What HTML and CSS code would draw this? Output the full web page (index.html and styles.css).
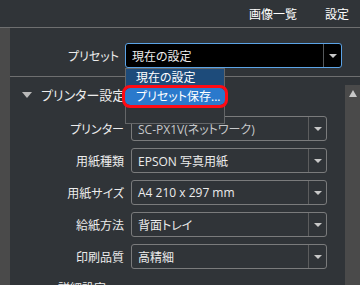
FILE: index.html
```html
<!DOCTYPE html>
<html>
<head>
  <link rel="stylesheet" href="styles.css">
</head>
<body>
  <div class="topbar">
    <span>画像一覧</span>
    <span>設定</span>
  </div>

  <div class="main">
    <div class="side"></div>

    <div class="panel">
      <div class="preset-row">
        <span class="label preset-label">プリセット</span>
        <div class="select preset-select">
          <span class="value">現在の設定</span>
          <span class="arrow"></span>
        </div>

        <div class="menu">
          <div class="menu-item">現在の設定</div>
          <div class="menu-item active">プリセット保存...</div>
        </div>
      </div>

      <div class="settings">
        <div class="settings-body">
          <div class="section-title">
            <span class="caret"></span>
            <span>プリンター設定</span>
          </div>

          <div class="row">
            <span class="label">プリンター</span>
            <div class="select">
              <span class="value dim">SC-PX1V(ネットワーク)</span>
              <span class="arrow"></span>
            </div>
          </div>
          <div class="row">
            <span class="label">用紙種類</span>
            <div class="select">
              <span class="value">EPSON 写真用紙</span>
              <span class="arrow"></span>
            </div>
          </div>
          <div class="row">
            <span class="label">用紙サイズ</span>
            <div class="select">
              <span class="value">A4 210 x 297 mm</span>
              <span class="arrow"></span>
            </div>
          </div>
          <div class="row">
            <span class="label">給紙方法</span>
            <div class="select">
              <span class="value">背面トレイ</span>
              <span class="arrow"></span>
            </div>
          </div>
          <div class="row">
            <span class="label">印刷品質</span>
            <div class="select">
              <span class="value">高精細</span>
              <span class="arrow"></span>
            </div>
          </div>

          <div class="subsection">詳細設定</div>
        </div>

        <div class="scrollbar">
          <span class="scroll-up"></span>
        </div>
      </div>
    </div>
  </div>
</body>
</html>
```

FILE: styles.css
```css
body {
  margin: 0;
  width: 360px;
  height: 285px;
  overflow: hidden;
  background: #303438;
  color: #ececec;
  font-family: "Open Sans", "Noto Sans CJK JP", sans-serif;
  font-size: 12px;
  font-feature-settings: "palt";
}

.topbar {
  height: 27px;
  border-bottom: 1px solid #6e6f70;
  display: flex;
  justify-content: flex-end;
  align-items: center;
  gap: 28px;
  padding-right: 11px;
  font-size: 12px;
  color: #ffffff;
}

.main {
  display: flex;
  height: 257px;
}

.side {
  width: 10px;
  background: #4a4a4a;
}

.panel {
  flex: 1;
  display: flex;
  flex-direction: column;
}

.preset-row {
  position: relative;
  display: flex;
  align-items: center;
  gap: 6px;
  padding: 15px 18px 8px 0;
  border-bottom: 1px solid #6e6f70;
}

.label {
  width: 114px;
  text-align: right;
  white-space: nowrap;
}

.preset-label {
  width: 109px;
}

.select {
  flex: 1;
  height: 23px;
  display: flex;
  align-items: center;
  border: 1px solid #7a7b7c;
  border-radius: 3px;
}

.preset-select {
  background: #000;
  border-color: #5ba3e6;
}

.value {
  flex: 1;
  padding-left: 6px;
  white-space: nowrap;
}

.value.dim {
  color: #c6c8ca;
}

.arrow {
  width: 17px;
  height: 100%;
  border-left: 1px solid #5c5d5e;
  position: relative;
}

.preset-select .arrow {
  border-left-color: #55595c;
}

.arrow::after {
  content: "";
  position: absolute;
  left: 5px;
  top: 10px;
  border-left: 4px solid transparent;
  border-right: 4px solid transparent;
  border-top: 4px solid #c8c8c8;
}

.menu {
  position: absolute;
  left: 115px;
  top: 40px;
  width: 98px;
  height: 54px;
  background: #303438;
  border: 1px solid #646668;
  display: flex;
  flex-direction: column;
  gap: 1px;
}

.menu-item {
  height: 17px;
  line-height: 17px;
  padding-left: 10px;
  background: #1d4b7a;
  color: #ffffff;
  white-space: nowrap;
}

.menu-item.active {
  background: #2a79cc;
  outline: 3px solid #ff0a14;
  outline-offset: 0;
  border-radius: 5px;
  margin: 1px -1px 0;
  padding-left: 11px;
}

.settings {
  flex: 1;
  display: flex;
  min-height: 0;
}

.settings-body {
  flex: 1;
  display: flex;
  flex-direction: column;
  gap: 7px;
  padding-right: 18px;
}

.section-title {
  display: flex;
  align-items: center;
  gap: 9px;
  height: 20px;
  margin: 8px 0 5px 12px;
  font-size: 13px;
}

.caret {
  width: 0;
  height: 0;
  border-left: 5px solid transparent;
  border-right: 5px solid transparent;
  border-top: 6px solid #b9b9b9;
}

.row {
  display: flex;
  align-items: center;
  gap: 7px;
}

.subsection {
  margin: 3px 0 0 48px;
}

.scrollbar {
  width: 15px;
  margin-top: 8px;
  background: #4a4a4a;
  position: relative;
}

.scroll-up {
  position: absolute;
  left: 4px;
  top: 5px;
  border-left: 4px solid transparent;
  border-right: 4px solid transparent;
  border-bottom: 7px solid #c8c8c8;
}
```
